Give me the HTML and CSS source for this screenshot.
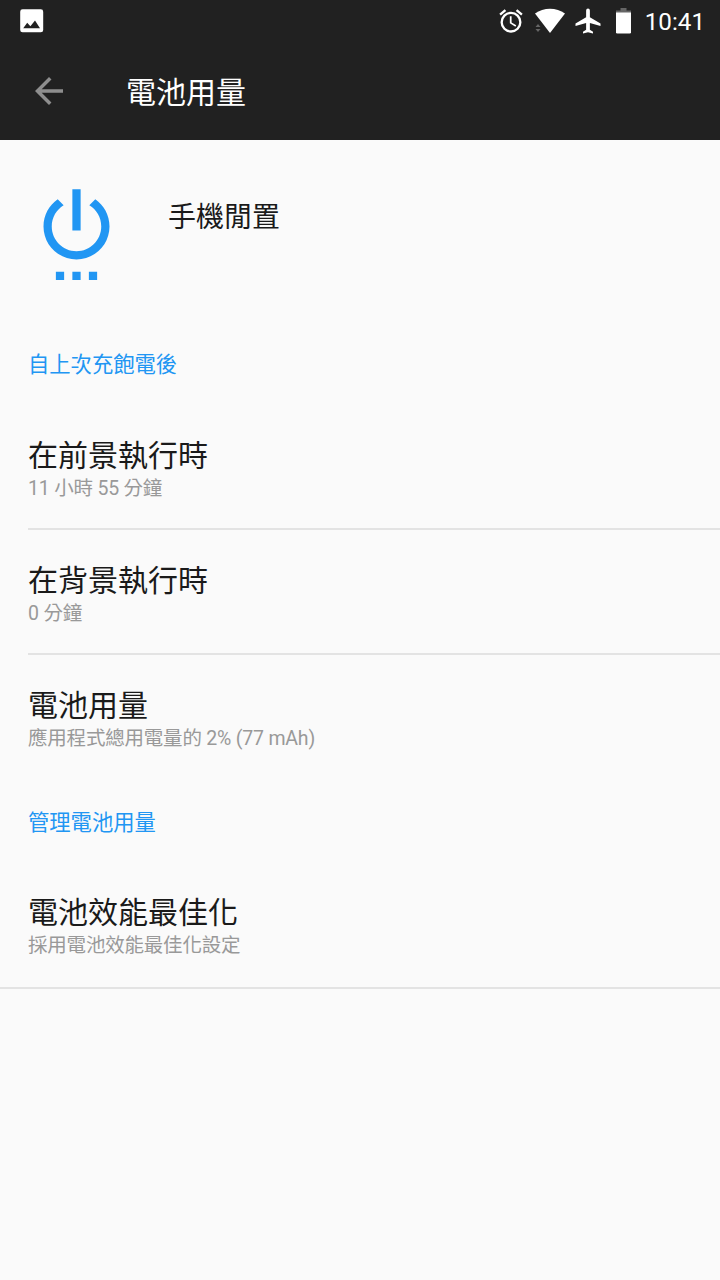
FILE: index.html
```html
<!DOCTYPE html>
<html lang="zh-Hant">
<head>
  <meta charset="UTF-8">
  <title>電池用量</title>
  <meta name="viewport" content="width=device-width, initial-scale=1.0">
  <link rel="stylesheet" href="styles.css">
</head>
<body>
  <header class="top">
    <div class="status-bar">
      <svg class="icon-picture" width="24" height="24" viewBox="0 0 24 24">
        <path fill="#fff" fill-rule="evenodd" d="M2.600 .3h18.200A2.400 2.400 0 0 1 23.200 2.700v18.200a2.400 2.400 0 0 1-2.400 2.400H2.600A2.400 2.400 0 0 1 .2 20.900V2.700A2.400 2.400 0 0 1 2.600 .3zM3.200 19.300H20l-5-7.700-4.600 5.700-3.200-3.600z"/>
      </svg>
      <div class="status-icons">
        <svg class="icon-alarm" width="28" height="28" viewBox="0 0 24 24">
          <path fill="#fff" d="M22 5.720l-4.600-3.860-1.290 1.530 4.600 3.860L22 5.720zM7.880 3.390L6.600 1.860 2 5.710l1.290 1.530 4.590-3.850zM12.500 8H11v6l4.750 2.850.75-1.230-4-2.370V8zM12 4a9 9 0 1 0 0 18 9 9 0 0 0 0-18zm0 16a7 7 0 1 1 0-14 7 7 0 0 1 0 14z"/>
        </svg>
        <svg class="icon-wifi" width="32" height="26" viewBox="0 0 32 26">
          <path fill="#fff" d="M1 5.500C9.500-.8 22.500-.8 31 5.500L16 25z"/>
          <path fill="#666" d="M1.500 19h5L4 16zM1.500 21h5L4 24z"/>
        </svg>
        <svg class="icon-plane" width="30" height="30" viewBox="0 0 24 24">
          <path fill="#fff" d="M22 16v-2l-8.500-5V3.500a1.500 1.500 0 0 0-3 0V9L2 14v2l8.500-2.500V19L8 20.500V22l4-1 4 1v-1.500L13.500 19v-5.500z"/>
        </svg>
        <svg class="icon-battery" width="15" height="26" viewBox="0 0 15 26">
          <path fill="#666" d="M4.500 0h6v2.500H15V6H0V2.500h4.500z"/>
          <path fill="#fff" d="M0 4.500h15v19.800a1.300 1.300 0 0 1-1.300 1.300H1.300A1.300 1.300 0 0 1 0 24.300z"/>
        </svg>
        <span class="clock">10:41</span>
      </div>
    </div>
    <div class="toolbar">
      <svg class="icon-back" width="42" height="42" viewBox="0 0 24 24">
        <path fill="#8e8e8e" d="M20 11H7.830l5.590-5.590L12 4l-8 8 8 8 1.410-1.410L7.830 13H20z"/>
      </svg>
      <h1>電池用量</h1>
    </div>
  </header>

  <main>
    <section class="app">
      <svg class="icon-power" width="99" height="99" viewBox="0 0 24 24">
        <path fill="#2196f3" d="M7 24h2v-2H7v2zm4 0h2v-2h-2v2zm4 0h2v-2h-2v2zM13 2h-2v10h2V2zm3.560 2.440l-1.450 1.450C16.840 6.940 18 8.830 18 11c0 3.310-2.690 6-6 6s-6-2.690-6-6c0-2.170 1.160-4.060 2.880-5.120L7.440 4.440C5.360 5.880 4 8.280 4 11c0 4.420 3.580 8 8 8s8-3.580 8-8c0-2.720-1.360-5.120-3.440-6.560z"/>
      </svg>
      <span class="app-name">手機閒置</span>
    </section>

    <h2>自上次充飽電後</h2>
    <div class="item">
      <div class="item-title">在前景執行時</div>
      <div class="item-summary">11 小時 55 分鐘</div>
    </div>
    <div class="item">
      <div class="item-title">在背景執行時</div>
      <div class="item-summary">0 分鐘</div>
    </div>
    <div class="item item-last">
      <div class="item-title">電池用量</div>
      <div class="item-summary">應用程式總用電量的 2% (77 mAh)</div>
    </div>

    <h2 class="manage">管理電池用量</h2>
    <div class="item item-last">
      <div class="item-title">電池效能最佳化</div>
      <div class="item-summary">採用電池效能最佳化設定</div>
    </div>
    <hr>
  </main>
</body>
</html>
```
FILE: styles.css
```css
* {
  box-sizing: border-box;
}
html, body {
  margin: 0;
  padding: 0;
}
body {
  min-height: 100vh;
  background: #fafafa;
  color: #1a1a1a;
  font-family: Roboto, "Noto Sans CJK TC", sans-serif;
}
svg {
  display: block;
  flex-shrink: 0;
}
h1, h2 {
  margin: 0;
  font-weight: 400;
}

.top {
  height: 140px;
  background: #212121;
  color: #fff;
}
.status-bar {
  display: flex;
  align-items: center;
  justify-content: space-between;
  height: 42px;
  padding: 0 15px 0 20px;
}
.status-icons {
  display: flex;
  align-items: center;
}
.icon-wifi {
  margin-left: 9px;
}
.icon-plane {
  margin-left: 7px;
}
.icon-battery {
  margin-left: 13px;
}
.clock {
  margin-left: 14px;
  padding-top: 2px;
  font-size: 24.200px;
  line-height: 40px;
}
.toolbar {
  display: flex;
  align-items: center;
  height: 98px;
  padding-left: 28px;
}
.toolbar h1 {
  margin-left: 56px;
  padding-top: 3px;
  font-size: 30px;
  line-height: 40px;
}

.app {
  display: flex;
  height: 201px;
  padding: 41px 0 0 27px;
}
.app-name {
  margin: 17px 0 0 42px;
  font-size: 28px;
  line-height: 40px;
}
h2 {
  height: 64px;
  padding-left: 28px;
  color: #2196f3;
  font-size: 21.300px;
  line-height: 48px;
}
.manage {
  height: 63px;
  margin-top: 19px;
}
.item {
  height: 125px;
  margin-left: 28px;
  padding-top: 31px;
  border-bottom: 2px solid #e3e3e3;
}
.item-title {
  font-size: 30px;
  line-height: 40px;
}
.item-summary {
  color: #999;
  font-size: 19.500px;
  line-height: 26px;
  letter-spacing: -0.200px;
}
.item-last {
  border-bottom: 0;
}
hr {
  height: 2px;
  margin: 0;
  border: 0;
  background: #e3e3e3;
}
```
